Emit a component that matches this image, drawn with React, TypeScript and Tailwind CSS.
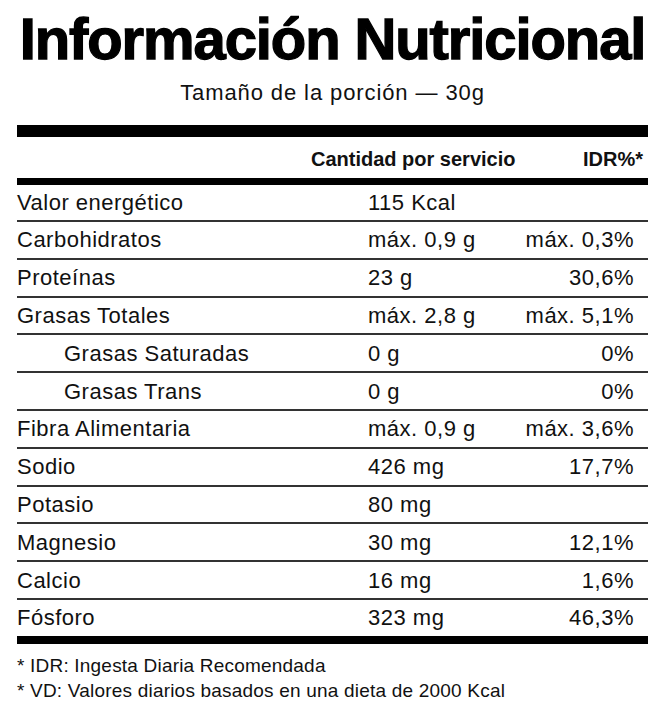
const ROWS = [
  { label: 'Valor energético', amount: '115 Kcal', idr: '' },
  { label: 'Carbohidratos', amount: 'máx. 0,9 g', idr: 'máx. 0,3%' },
  { label: 'Proteínas', amount: '23 g', idr: '30,6%' },
  { label: 'Grasas Totales', amount: 'máx. 2,8 g', idr: 'máx. 5,1%' },
  { label: 'Grasas Saturadas', amount: '0 g', idr: '0%', sub: true },
  { label: 'Grasas Trans', amount: '0 g', idr: '0%', sub: true },
  { label: 'Fibra Alimentaria', amount: 'máx. 0,9 g', idr: 'máx. 3,6%' },
  { label: 'Sodio', amount: '426 mg', idr: '17,7%' },
  { label: 'Potasio', amount: '80 mg', idr: '' },
  { label: 'Magnesio', amount: '30 mg', idr: '12,1%' },
  { label: 'Calcio', amount: '16 mg', idr: '1,6%' },
  { label: 'Fósforo', amount: '323 mg', idr: '46,3%' },
];

export default function App() {
  return (
    <div className="w-[660px] h-[713px] bg-white text-[#111] font-['Liberation_Sans',Arial,sans-serif] pl-[17px] pr-[12px]">
      {/* Title */}
      <h1 className="pt-[6px] h-[70px] text-[58px] leading-[66px] font-bold tracking-[-1.1px] text-black text-center whitespace-nowrap [-webkit-text-stroke:1.3px_black]">
        Información Nutricional
      </h1>
      <p className="h-[41px] pt-[3px] text-[22px] leading-[40px] tracking-[0.9px] text-center">
        Tamaño de la porción — 30g
      </p>

      <div className="h-[12px] bg-black mt-[14px]" />

      {/* Header */}
      <div className="flex items-center h-[41px] text-[20px] font-bold pt-[3px]">
        <span className="flex-1" />
        <span className="w-[272px]">Cantidad por servicio</span>
        <span className="text-right pr-[5px]">IDR%*</span>
      </div>
      <div className="h-[7px] bg-black" />

      {/* Rows */}
      <div className="text-[22px] tracking-[0.5px]">
        {ROWS.map((row, i) => (
          <div
            key={row.label}
            className={`flex items-center ${i === 0 ? 'h-[35px]' : 'h-[37.8px] border-t-2 border-[#333]'}`}
          >
            <span className={`w-[351px] ${row.sub ? 'pl-[47px]' : ''}`}>{row.label}</span>
            <span className="w-[150px]">{row.amount}</span>
            <span className="flex-1 text-right pr-[14px]">{row.idr}</span>
          </div>
        ))}
      </div>
      <div className="h-[8px] bg-black" />

      {/* Footnotes */}
      <div className="pt-[9px] text-[19px] leading-[25px] tracking-[0.2px]">
        <p>* IDR: Ingesta Diaria Recomendada</p>
        <p>* VD: Valores diarios basados en una dieta de 2000 Kcal</p>
      </div>
    </div>
  );
}
